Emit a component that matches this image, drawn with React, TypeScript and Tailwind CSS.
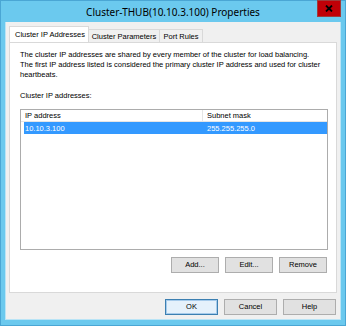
import React from "react";

const ui = { fontFamily: '"Liberation Sans", Arial, sans-serif' };

function Btn({ label, w, def }: { label: string; w: string; def?: boolean }) {
  return (
    <div
      className={`${w} h-[16px] flex items-center justify-center border text-[7.5px] leading-none text-black ${
        def ? "border-[#3c7fb1] bg-[#e5f1fb] ring-1 ring-inset ring-[#a6cbeb]" : "border-[#adadad] bg-[#e1e1e1]"
      }`}
    >
      {label}
    </div>
  );
}

export default function App() {
  return (
    <div className="w-[346px] h-[326px] bg-[#6bc9ee] border border-[#4aa6d4] flex flex-col" style={ui}>
      <div className="relative h-[22px] flex items-center justify-center">
        <span className="text-[10px] text-black mt-[2px] whitespace-nowrap" style={{ fontFamily: '"Noto Sans", "Open Sans", sans-serif' }}>
          Cluster-THUB(10.10.3.100) Properties
        </span>
        <div className="absolute z-20 top-[-1px] right-[4px] w-[24px] h-[17px] bg-red-700 border border-[#a03c3c] flex items-center justify-center">
          <svg width="8" height="7" viewBox="0 0 8 7">
            <path d="M1 0.5 L7 6.5 M7 0.5 L1 6.5" stroke="#000" strokeWidth="1.8" />
          </svg>
        </div>
      </div>
      <div className="mx-[4px] flex-1 bg-[#f0f0f0] border border-[#b9e4f6] border-t-0 flex flex-col pt-[5px] px-[3px] pb-[4px]">
        <div className="flex items-end h-[15px] relative z-10">
          <div className="h-[16px] pl-[5px] bg-white border border-[#d9d9d9] border-b-0 flex items-center text-[7.5px] text-black w-[80px] whitespace-nowrap">
            Cluster IP Addresses
          </div>
          <div className="h-[13px] bg-[#f0f0f0] border border-[#d9d9d9] border-b-0 border-l-0 flex items-center justify-center text-[7.5px] text-black w-[71px] whitespace-nowrap">
            Cluster Parameters
          </div>
          <div className="h-[13px] bg-[#f0f0f0] border border-[#d9d9d9] border-b-0 border-l-0 flex items-center justify-center text-[7.5px] text-black w-[43px] whitespace-nowrap">
            Port Rules
          </div>
        </div>
        <div className="h-[251px] bg-white border border-[#d9d9d9] flex flex-col pl-[10px] pr-[8px] pt-[7px]">
          <div className="text-[7.5px] leading-[10px] text-black whitespace-nowrap">
            The cluster IP addresses are shared by every member of the cluster for load balancing.
            <br />
            The first IP address listed is considered the primary cluster IP address and used for cluster
            <br />
            heartbeats.
          </div>
          <div className="mt-[11px] text-[7.5px] leading-[10px] text-black">Cluster IP addresses:</div>
          <div className="mt-[8px] h-[141px] border border-[#acacac] bg-white flex flex-col">
            <div className="h-[12px] flex border-b border-[#e5e5e5] text-[7.5px] text-black">
              <div className="w-[182px] border-r border-[#e5e5e5] pl-[4px] flex items-center">IP address</div>
              <div className="flex-1 pl-[4px] flex items-center">Subnet mask</div>
            </div>
            <div className="ml-[3px] h-[12px] bg-[#3399ff] flex text-[7.5px] text-white">
              <div className="w-[182px] pl-[1px] flex items-center">10.10.3.100</div>
              <div className="flex-1 pl-[1px] flex items-center">255.255.255.0</div>
            </div>
          </div>
          <div className="mt-[7px] flex justify-end gap-[6px] pr-[1px]">
            <Btn label="Add..." w="w-[48px]" />
            <Btn label="Edit..." w="w-[48px]" />
            <Btn label="Remove" w="w-[48px]" />
          </div>
        </div>
        <div className="mt-[6px] flex justify-end gap-[6px] pr-[1px]">
          <Btn label="OK" w="w-[53px]" def />
          <Btn label="Cancel" w="w-[53px]" />
          <Btn label="Help" w="w-[53px]" />
        </div>
      </div>
      <div className="h-[5px]" />
    </div>
  );
}
